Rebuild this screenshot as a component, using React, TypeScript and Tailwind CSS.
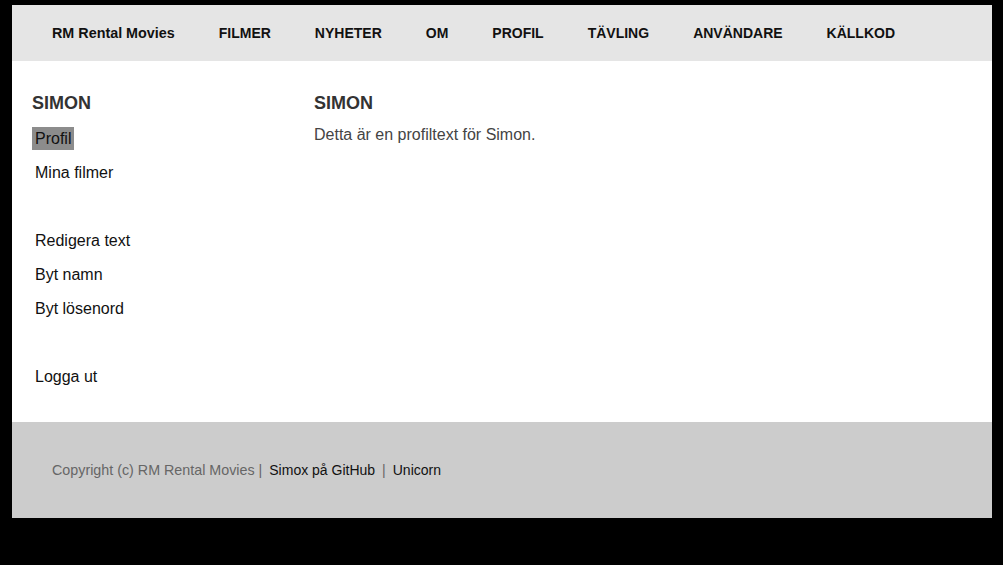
const navItems = ["FILMER", "NYHETER", "OM", "PROFIL", "TÄVLING", "ANVÄNDARE", "KÄLLKOD"];

const menu = [
  { label: "Profil", active: true },
  { label: "Mina filmer" },
  null,
  { label: "Redigera text" },
  { label: "Byt namn" },
  { label: "Byt lösenord" },
  null,
  { label: "Logga ut" },
];

function App() {
  return (
    <div className="min-h-[565px] bg-black pt-[5px] pl-[12px] font-['Liberation_Sans',Arial,sans-serif]">
      <div className="w-[980px] bg-white">
        {/* header */}
        <div className="h-[56px] bg-[#e5e5e5] flex items-center pl-[40px] gap-[44px] text-[14px] leading-[16px] font-bold text-[#111]">
          <span className="text-[14.35px] leading-[16px]">RM Rental Movies</span>
          {navItems.map((item) => (
            <span key={item}>{item}</span>
          ))}
        </div>

        {/* main */}
        <div className="h-[361px] flex pl-[20px] pt-[32px]">
          <div className="w-[282px]">
            <h2 className="text-[18px] leading-[21px] font-bold text-[#333] mb-[7px]">SIMON</h2>
            <ul>
              {menu.map((m, i) => (
                <li key={i} className="h-[34px] flex items-center text-[16px] text-[#111]">
                  {m && (
                    <span className={`px-[3px] py-[2px] leading-[19px] ${m.active ? "bg-[#8c8c8c]" : ""}`}>
                      {m.label}
                    </span>
                  )}
                </li>
              ))}
            </ul>
          </div>
          <div>
            <h2 className="text-[18px] leading-[21px] font-bold text-[#333] mb-[12px]">SIMON</h2>
            <p className="text-[16px] leading-[18px] text-[#444]">Detta är en profiltext för Simon.</p>
          </div>
        </div>

        {/* footer */}
        <div className="h-[96px] bg-[#cccccc] flex items-center pl-[40px] text-[14px] leading-[16px] text-[#666]">
          <span className="text-[14.3px]">Copyright (c) RM Rental Movies |</span>
          <span className="ml-[7px] text-[#111]">Simox på GitHub</span>
          <span className="mx-[7px]">|</span>
          <span className="text-[#111]">Unicorn</span>
        </div>
      </div>
    </div>
  );
}

export default App;
